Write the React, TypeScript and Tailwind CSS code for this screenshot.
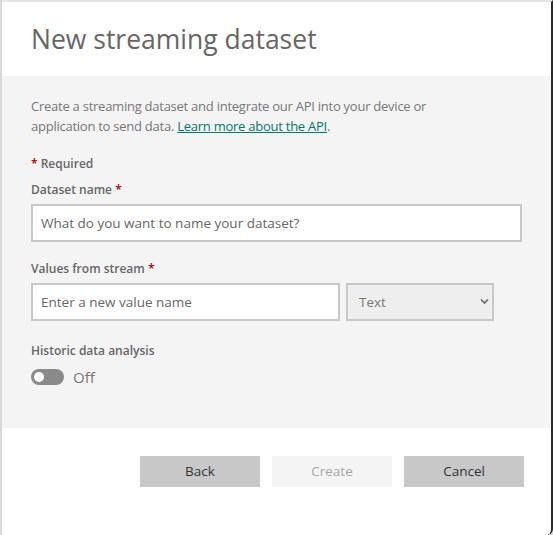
import { useState } from 'react'

export default function App() {
  const [historic, setHistoric] = useState(false)

  return (
    <div className="flex h-[535px] w-[553px] bg-[#d9d9d9] font-['Open_Sans',sans-serif]">
      <div className="ml-[2px] flex flex-1 flex-col overflow-hidden rounded-br-[6px] border-t-2 border-r-2 border-t-[#e6e6e6] border-r-[#2b2b2b] bg-white">
        {/* header */}
        <div className="flex h-[74px] items-center pl-[29px]">
          <h1 className="pt-[2px] text-[26.5px] font-normal text-[#666]">New streaming dataset</h1>
        </div>

        {/* body */}
        <div className="h-[352px] bg-[#f4f4f4] pt-[20px] pl-[29px] pr-[29px]">
          <p className="text-[13px] leading-[20px] tracking-[-0.25px] text-[#777]">
            Create a streaming dataset and integrate our API into your device or
            <br />
            application to send data.{' '}
            <a href="#" className="text-[#00796b] underline">
              Learn more about the API
            </a>
            .
          </p>

          <div className="mt-[19px] text-[12px] font-semibold text-[#666]">
            <span className="text-[#a80000]">*</span> Required
          </div>

          <label className="mt-[8px] block text-[12px] font-semibold text-[#666]">
            Dataset name <span className="text-[#a80000]">*</span>
          </label>
          <input
            type="text"
            placeholder="What do you want to name your dataset?"
            className="mt-[5px] block h-[38px] w-[491px] border-2 border-[#c8c8c8] bg-white px-[8px] text-[13.5px] text-[#333] placeholder:text-[#666] focus:outline-none"
          />

          <label className="mt-[18px] block text-[12px] font-semibold text-[#666]">
            Values from stream <span className="text-[#a80000]">*</span>
          </label>
          <div className="mt-[5px] flex gap-[6px]">
            <input
              type="text"
              placeholder="Enter a new value name"
              className="block h-[38px] w-[309px] border-2 border-[#c8c8c8] bg-white px-[8px] text-[13.5px] text-[#333] placeholder:text-[#666] focus:outline-none"
            />
            <div className="relative flex h-[38px] w-[148px] items-center border-2 border-[#c8c8c8] bg-[#eeeeee] pl-[11px] text-[13.5px] text-[#777]">
              Text
              <svg className="absolute right-[3px] top-[13px]" width="9" height="7" viewBox="0 0 9 7">
                <path d="M1 1.5 L4.5 5 L8 1.5" fill="none" stroke="#666" strokeWidth="1.6" />
              </svg>
            </div>
          </div>

          <label className="mt-[21px] block text-[12px] font-semibold text-[#666]">
            Historic data analysis
          </label>
          <div className="mt-[6px] flex items-center gap-[9px]">
            <button
              onClick={() => setHistoric(!historic)}
              className={`flex h-[16px] w-[33px] items-center rounded-full px-[3px] ${
                historic ? 'justify-end bg-[#00796b]' : 'justify-start bg-[#8a8a8a]'
              }`}
            >
              <span className="h-[10px] w-[10px] rounded-full bg-white" />
            </button>
            <span className="text-[15px] text-[#777]">{historic ? 'On' : 'Off'}</span>
          </div>
        </div>

        {/* footer */}
        <div className="flex justify-end gap-[12px] pt-[28px] pr-[27px]">
          <button className="h-[31px] w-[120px] bg-[#c8c8c8] text-[13.5px] text-[#333]">Back</button>
          <button disabled className="h-[31px] w-[120px] bg-[#f4f4f4] text-[13.5px] text-[#a6a6a6]">
            Create
          </button>
          <button className="h-[31px] w-[120px] bg-[#c8c8c8] text-[13.5px] text-[#333]">Cancel</button>
        </div>
      </div>
    </div>
  )
}
